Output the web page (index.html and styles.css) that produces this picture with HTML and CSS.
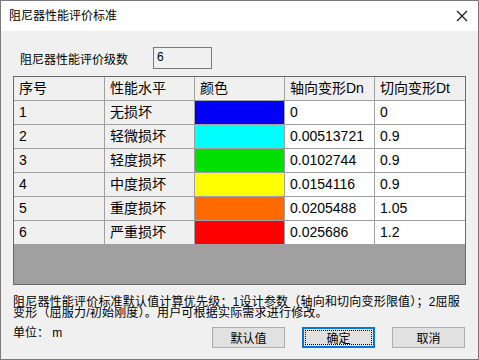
FILE: index.html
```html
<!DOCTYPE html>
<html lang="zh">
<head>
<meta charset="utf-8">
<title>阻尼器性能评价标准</title>
<link rel="stylesheet" href="styles.css">
</head>
<body>
<div class="window">
  <div class="titlebar">
    <span class="title">阻尼器性能评价标准</span>
    <svg class="close" width="12" height="12" viewBox="0 0 12 12"><path d="M1 1 L11 11 M11 1 L1 11" stroke="#111" stroke-width="1.1" fill="none"/></svg>
  </div>
  <div class="content">
    <div class="level">
      <span class="level-label">阻尼器性能评价级数</span>
      <div class="level-input">6</div>
    </div>
    <div class="grid-frame">
      <div class="grid">
        <div class="cell head">序号</div>
        <div class="cell head">性能水平</div>
        <div class="cell head">颜色</div>
        <div class="cell head">轴向变形Dn</div>
        <div class="cell head">切向变形Dt</div>

        <div class="cell fixed">1</div>
        <div class="cell fixed">无损坏</div>
        <div class="cell c-blue"></div>
        <div class="cell">0</div>
        <div class="cell">0</div>

        <div class="cell fixed">2</div>
        <div class="cell fixed">轻微损坏</div>
        <div class="cell c-cyan"></div>
        <div class="cell">0.00513721</div>
        <div class="cell">0.9</div>

        <div class="cell fixed">3</div>
        <div class="cell fixed">轻度损坏</div>
        <div class="cell c-green"></div>
        <div class="cell">0.0102744</div>
        <div class="cell">0.9</div>

        <div class="cell fixed">4</div>
        <div class="cell fixed">中度损坏</div>
        <div class="cell c-yellow"></div>
        <div class="cell">0.0154116</div>
        <div class="cell">0.9</div>

        <div class="cell fixed">5</div>
        <div class="cell fixed">重度损坏</div>
        <div class="cell c-orange"></div>
        <div class="cell">0.0205488</div>
        <div class="cell">1.05</div>

        <div class="cell fixed">6</div>
        <div class="cell fixed">严重损坏</div>
        <div class="cell c-red"></div>
        <div class="cell">0.025686</div>
        <div class="cell">1.2</div>
      </div>
    </div>
    <p class="note">阻尼器性能评价标准默认值计算优先级：1设计参数（轴向和切向变形限值）；2屈服变形（屈服力/初始刚度）。用户可根据实际需求进行修改。</p>
    <div class="footer">
      <span class="unit">单位： m</span>
      <div class="buttons">
        <button class="btn">默认值</button>
        <button class="btn btn-default"><span class="focus">确定</span></button>
        <button class="btn">取消</button>
      </div>
    </div>
  </div>
</div>
</body>
</html>
```
FILE: styles.css
```css
* { box-sizing: border-box; }
html, body { margin: 0; padding: 0; }
body {
  width: 479px;
  height: 360px;
  overflow: hidden;
  font-family: "Liberation Sans", "Noto Sans CJK SC", sans-serif;
  color: #000;
}
.window {
  width: 479px;
  height: 360px;
  border: 1px solid #7a7a7a;
  background: #f0f0f0;
  display: flex;
  flex-direction: column;
}
.titlebar {
  height: 30px;
  background: #fff;
  display: flex;
  align-items: center;
  justify-content: space-between;
  padding: 0 10px 0 8px;
  flex-shrink: 0;
}
.title {
  font-size: 12px;
  line-height: 14px;
}
.close { display: block; }
.content {
  padding: 0 12px;
  display: flex;
  flex-direction: column;
}
.level {
  margin-top: 16px;
  height: 22px;
  display: flex;
  align-items: center;
}
.level-label {
  font-size: 12px;
  margin-left: 7px;
  width: 133px;
}
.level-input {
  width: 59px;
  height: 22px;
  border: 1px solid #7a7a7a;
  font-size: 12px;
  line-height: 18px;
  padding-left: 3px;
}
.grid-frame {
  margin-top: 7px;
  height: 209px;
  border: 1px solid #6a6a6a;
  background: #a0a0a0;
}
.grid {
  display: grid;
  grid-template-columns: 90px 89px 89px 89px 90px;
  grid-auto-rows: 23px;
  gap: 1px;
  background: #a0a0a0;
  border-bottom: 1px solid #a0a0a0;
}
.cell {
  background: #fff;
  font-size: 14px;
  line-height: 23px;
  padding-left: 5px;
  white-space: nowrap;
  overflow: hidden;
}
.cell.head, .cell.fixed { background: #f0f0f0; }
.c-blue { background: #0000f4; }
.c-cyan { background: #00ffff; }
.c-green { background: #00e000; }
.c-yellow { background: #ffff00; }
.c-orange { background: #ff6a00; }
.c-red { background: #ff0000; }
.note {
  margin: 12px 0 0 0;
  font-size: 12px;
  line-height: 11px;
  letter-spacing: 0.2px;
}
.footer {
  margin-top: 8px;
  display: flex;
  justify-content: space-between;
  align-items: flex-start;
}
.unit {
  font-size: 12px;
  line-height: 14px;
  margin-top: -1px;
}
.buttons {
  display: flex;
  gap: 17px;
  margin-right: 1px;
}
.btn {
  width: 73px;
  height: 21px;
  background: #e1e1e1;
  border: 1px solid #adadad;
  font-family: "Liberation Sans", "Noto Sans CJK SC", sans-serif;
  font-size: 12px;
  color: #000;
  padding: 0;
  margin: 0;
  display: flex;
  align-items: center;
  justify-content: center;
}
.btn-default {
  border: 2px solid #0078d7;
  padding: 1px;
}
.focus {
  flex: 1;
  align-self: stretch;
  display: flex;
  align-items: center;
  justify-content: center;
  border: 1px dotted #000;
}
```
